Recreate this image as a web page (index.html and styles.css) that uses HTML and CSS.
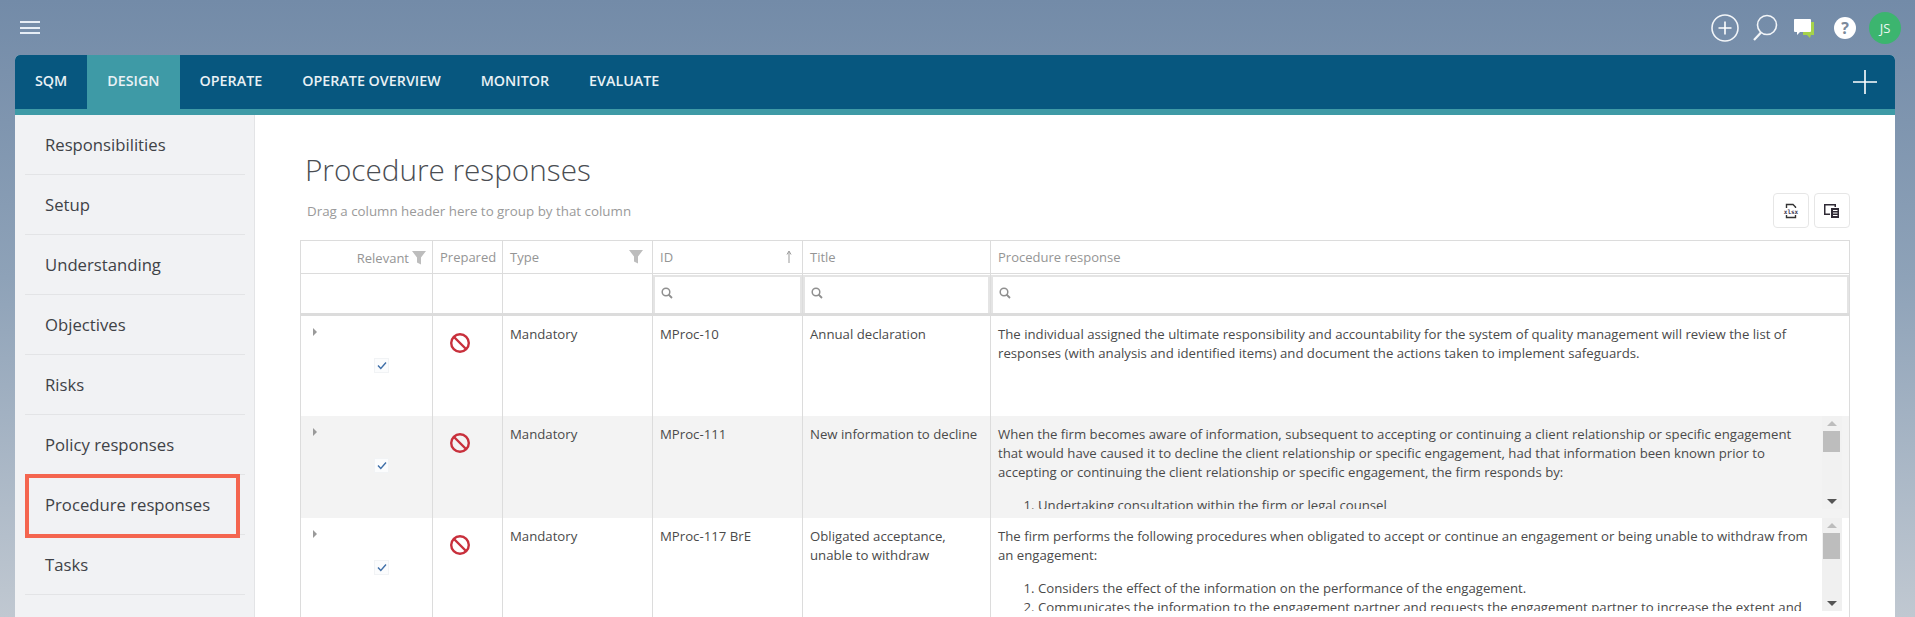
FILE: index.html
```html
<!DOCTYPE html>
<html lang="en">
<head>
<meta charset="utf-8">
<title>Procedure responses</title>
<link rel="stylesheet" href="styles.css">
</head>
<body>
<header class="topbar">
  <div class="burger"><span></span><span></span><span></span></div>
  <div class="top-icons">
    <svg class="ic-add" width="30" height="30" viewBox="0 0 30 30"><circle cx="15" cy="15" r="13" fill="none" stroke="#f2f5f8" stroke-width="1.6"/><path d="M15 8.5v13M8.5 15h13" stroke="#fff" stroke-width="1.6"/></svg>
    <svg class="ic-search" width="28" height="30" viewBox="0 0 28 30"><circle cx="16" cy="12" r="9.5" fill="none" stroke="#f2f5f8" stroke-width="1.6"/><path d="M10 19.5L3 27" stroke="#f2f5f8" stroke-width="2.2"/></svg>
    <svg class="ic-chat" width="22" height="22" viewBox="0 0 22 22"><path d="M10 4h11v13h-3l-1 3-3-3h-4z" fill="#a5d24a"/><path d="M1 1.500Q1 1 2 1h15q1 0 1 1v11q0 1-1 1H7l-3 3v-3H2q-1 0-1-1z" fill="#fff"/></svg>
    <div class="ic-help">?</div>
    <div class="avatar">JS</div>
  </div>
</header>
<div class="card">
  <nav class="tabs">
    <a class="tab">SQM</a>
    <a class="tab active">DESIGN</a>
    <a class="tab">OPERATE</a>
    <a class="tab">OPERATE OVERVIEW</a>
    <a class="tab">MONITOR</a>
    <a class="tab">EVALUATE</a>
    <svg class="tab-plus" width="24" height="24" viewBox="0 0 24 24"><path d="M12 0v24M0 12h24" stroke="#fff" stroke-width="1.6"/></svg>
  </nav>
  <div class="content">
    <aside class="sidebar">
      <ul class="side-list">
        <li class="side-item">Responsibilities</li>
        <li class="side-item">Setup</li>
        <li class="side-item">Understanding</li>
        <li class="side-item">Objectives</li>
        <li class="side-item">Risks</li>
        <li class="side-item">Policy responses</li>
        <li class="side-item current">Procedure responses<span class="callout"></span></li>
        <li class="side-item">Tasks</li>
      </ul>
    </aside>
    <main class="main">
      <h1 class="page-title">Procedure responses</h1>
      <div class="toolbar">
        <span class="group-hint">Drag a column header here to group by that column</span>
        <div class="tool-buttons">
          <button class="tool-btn">
            <svg width="16" height="16" viewBox="0 0 16 16"><path d="M3.500 5V1.500h6.500L12.500 4V5M3.500 12v2.500h9V12" fill="none" stroke="#333" stroke-width="1.400"/><text x="8" y="10.800" text-anchor="middle" class="xlsx">xlsx</text></svg>
          </button>
          <button class="tool-btn">
            <svg width="16" height="16" viewBox="0 0 16 16"><path d="M0 1h12v3h-1.500V2.500h-9v8H6V12H0z" fill="#2f2a35"/><path d="M7 5h8v10H7z" fill="#2f2a35"/><path d="M9 7.500h4.500M9 10h4.500M9 12.500h4.500" stroke="#fff"/></svg>
          </button>
        </div>
      </div>
      <table class="grid">
        <colgroup>
          <col class="c-rel"><col class="c-prep"><col class="c-type"><col class="c-id"><col class="c-title"><col class="c-desc">
        </colgroup>
        <thead>
          <tr class="head-row">
            <th class="th-rel"><span>Relevant</span><svg class="filter" width="14" height="14" viewBox="0 0 14 14"><path d="M0 0h14L9 6.500v7L5 11.500V6.500z" fill="#bdbdbd"/></svg></th>
            <th>Prepared</th>
            <th><div class="th-split"><span>Type</span><svg class="filter" width="14" height="14" viewBox="0 0 14 14"><path d="M0 0h14L9 6.500v7L5 11.500V6.500z" fill="#bdbdbd"/></svg></div></th>
            <th><div class="th-split"><span>ID</span><svg width="8" height="14" viewBox="0 0 8 14"><path d="M4 13V2M2 4.500L4 1l2 3.500" fill="none" stroke="#999"/></svg></div></th>
            <th>Title</th>
            <th>Procedure response</th>
          </tr>
          <tr class="filter-row">
            <td></td><td></td><td></td>
            <td class="search-cell"><div class="search-box"><svg width="12" height="12" viewBox="0 0 12 12"><circle cx="5" cy="5" r="3.800" fill="none" stroke="#8f8f8f" stroke-width="1.500"/><path d="M7.500 7.500L11 11" stroke="#8f8f8f" stroke-width="1.800"/></svg></div></td>
            <td class="search-cell"><div class="search-box"><svg width="12" height="12" viewBox="0 0 12 12"><circle cx="5" cy="5" r="3.800" fill="none" stroke="#8f8f8f" stroke-width="1.500"/><path d="M7.500 7.500L11 11" stroke="#8f8f8f" stroke-width="1.800"/></svg></div></td>
            <td class="search-cell"><div class="search-box"><svg width="12" height="12" viewBox="0 0 12 12"><circle cx="5" cy="5" r="3.800" fill="none" stroke="#8f8f8f" stroke-width="1.500"/><path d="M7.500 7.500L11 11" stroke="#8f8f8f" stroke-width="1.800"/></svg></div></td>
          </tr>
        </thead>
        <tbody>
          <tr class="row row-a">
            <td class="cell-rel"><span class="expander"></span><span class="check"><svg width="10" height="9" viewBox="0 0 10 9"><path d="M1 4.500L3.800 7.500L9 1.500" fill="none" stroke="#3f6fa8" stroke-width="1.400"/></svg></span></td>
            <td class="cell-prep"><svg width="22" height="22" viewBox="0 0 22 22"><circle cx="11" cy="11" r="8.800" fill="none" stroke="#c8303c" stroke-width="2.400"/><path d="M5 5l12 12" stroke="#c8303c" stroke-width="2.400"/></svg></td>
            <td>Mandatory</td>
            <td>MProc-10</td>
            <td>Annual declaration</td>
            <td class="cell-desc"><div class="desc-body"><div class="desc-text"><p>The individual assigned the ultimate responsibility and accountability for the system of quality management will review the list of<br>responses (with analysis and identified items) and document the actions taken to implement safeguards.</p></div></div></td>
          </tr>
          <tr class="row row-b alt">
            <td class="cell-rel"><span class="expander"></span><span class="check"><svg width="10" height="9" viewBox="0 0 10 9"><path d="M1 4.500L3.800 7.500L9 1.500" fill="none" stroke="#3f6fa8" stroke-width="1.400"/></svg></span></td>
            <td class="cell-prep"><svg width="22" height="22" viewBox="0 0 22 22"><circle cx="11" cy="11" r="8.800" fill="none" stroke="#c8303c" stroke-width="2.400"/><path d="M5 5l12 12" stroke="#c8303c" stroke-width="2.400"/></svg></td>
            <td>Mandatory</td>
            <td>MProc-111</td>
            <td>New information to decline</td>
            <td class="cell-desc"><div class="desc-body scrolling"><div class="desc-text"><p>When the firm becomes aware of information, subsequent to accepting or continuing a client relationship or specific engagement<br>that would have caused it to decline the client relationship or specific engagement, had that information been known prior to<br>accepting or continuing the client relationship or specific engagement, the firm responds by:</p><ol><li>Undertaking consultation within the firm or legal counsel</li></ol></div>
              <div class="scrollbar"><span class="arrow up"></span><span class="thumb thumb-short"></span><span class="spacer"></span><span class="arrow down"></span></div></div></td>
          </tr>
          <tr class="row row-c">
            <td class="cell-rel"><span class="expander"></span><span class="check"><svg width="10" height="9" viewBox="0 0 10 9"><path d="M1 4.500L3.800 7.500L9 1.500" fill="none" stroke="#3f6fa8" stroke-width="1.400"/></svg></span></td>
            <td class="cell-prep"><svg width="22" height="22" viewBox="0 0 22 22"><circle cx="11" cy="11" r="8.800" fill="none" stroke="#c8303c" stroke-width="2.400"/><path d="M5 5l12 12" stroke="#c8303c" stroke-width="2.400"/></svg></td>
            <td>Mandatory</td>
            <td>MProc-117 BrE</td>
            <td>Obligated acceptance,<br>unable to withdraw</td>
            <td class="cell-desc"><div class="desc-body scrolling"><div class="desc-text"><p>The firm performs the following procedures when obligated to accept or continue an engagement or being unable to withdraw from<br>an engagement:</p><ol><li>Considers the effect of the information on the performance of the engagement.</li><li>Communicates the information to the engagement partner and requests the engagement partner to increase the extent and</li></ol></div>
              <div class="scrollbar"><span class="arrow up"></span><span class="thumb thumb-long"></span><span class="spacer"></span><span class="arrow down"></span></div></div></td>
          </tr>
        </tbody>
      </table>
    </main>
  </div>
</div>
</body>
</html>
```
FILE: styles.css
```css
* { box-sizing: border-box; }
html, body { margin: 0; height: 617px; overflow: hidden; }
body {
  font-family: "Open Sans", "Liberation Sans", sans-serif;
  background: linear-gradient(180deg, #738ba8 0%, #8ea2b8 45%, #c0c8d1 100%);
  color: #444;
}
.topbar {
  height: 55px;
  padding: 0 14px 0 20px;
  display: flex;
  align-items: center;
  justify-content: space-between;
}
.burger { width: 20px; display: flex; flex-direction: column; gap: 3.5px; }
.burger span { height: 2px; background: #e6edf5; display: block; }
.top-icons { display: flex; align-items: center; }
.ic-add { margin-right: 11px; }
.ic-search { margin-right: 14px; }
.ic-chat { margin-right: 19px; margin-top: 2px; }
.ic-help {
  width: 22px; height: 22px; border-radius: 50%;
  background: #fff; color: #7b8a9b;
  font: 700 16px/22px "Open Sans", sans-serif; text-align: center;
  margin-right: 13px;
}
.avatar {
  width: 32px; height: 32px; border-radius: 50%;
  background: #3cb56f; color: #eef8f2;
  font-size: 13px; line-height: 32px; text-align: center;
}
.card { margin-left: 15px; width: 1880px; height: 562px; overflow: hidden; border-radius: 5px 5px 0 0; background: #fff; }
.tabs {
  height: 60px;
  background: #07577f;
  border-bottom: 6px solid #3e9aa6;
  display: flex;
  align-items: stretch;
}
.tab {
  padding: 0 20px;
  color: #e9f1f5;
  font-size: 14.300px;
  font-weight: 600;
  line-height: 52px;
}
.tab.active { background: #3e9aa6; }
.tab-plus { margin: 15px 18px 0 auto; }
.content { display: flex; height: 502px; }
.sidebar { width: 240px; flex: none; background: #f1f2f4; border-right: 1px solid #e3e4e6; padding: 0 9px 0 10px; }
.side-list { list-style: none; margin: 0; padding: 0; }
.side-item {
  position: relative;
  height: 60px;
  line-height: 60px;
  padding-left: 20px;
  font-size: 16.700px;
  color: #3f4247;
  border-bottom: 1px solid #e3e4e6;
}
.callout {
  position: absolute;
  left: 0; top: -1px;
  width: 215px; height: 64px;
  border: 4px solid #f4654f;
}
.main { flex: 1; padding: 30px 45px 0; min-width: 0; }
.page-title {
  margin: 0 0 0 5px;
  height: 48px;
  font-size: 29.700px;
  line-height: 50px;
  font-weight: 300;
  color: #4a4d52;
}
.toolbar { height: 35px; margin-bottom: 12px; display: flex; justify-content: space-between; align-items: center; }
.group-hint { font-size: 13.350px; color: #9a9a9a; margin-left: 7px; }
.tool-buttons { display: flex; gap: 5px; }
.tool-btn {
  width: 36px; height: 35px; padding: 0;
  background: #fff; border: 1px solid #e6e6e6; border-radius: 4px;
  display: flex; align-items: center; justify-content: center;
}
.xlsx { font-family: "DejaVu Sans Mono", monospace; font-size: 6px; font-weight: 700; fill: #3a3550; }
.grid {
  table-layout: fixed;
  width: 1550px;
  border-collapse: collapse;
  font-size: 13.200px;
  color: #4a4a4a;
}
.c-rel { width: 132px; }
.c-prep { width: 70px; }
.c-type, .c-id { width: 150px; }
.c-title { width: 188px; }
.grid td, .grid th { border-left: 1px solid #dcdcdc; border-right: 1px solid #dcdcdc; padding: 0; }
.head-row { height: 33px; }
.head-row th {
  border-top: 1px solid #dcdcdc;
  border-bottom: 1px solid #dcdcdc;
  padding: 0 7px;
  text-align: left;
  font-weight: 400;
  font-size: 13px;
  color: #959595;
}
.grid .th-rel { padding-right: 6px; text-align: right; white-space: nowrap; }
.th-rel span { vertical-align: middle; margin-right: 3px; }
.th-rel .filter { vertical-align: middle; margin-left: 0; }
.th-split { display: flex; justify-content: space-between; align-items: center; }
.th-split svg:last-child { margin-right: 2px; }
.filter-row { height: 41px; }
.filter-row td { border-bottom: 3px solid #dcdcdc; }
.search-box { height: 38px; border: 2px solid #e4e4e4; border-bottom: 0; padding: 0 0 4px 6px; display: flex; align-items: center; }
.row { height: 101px; }
.row-b { height: 102px; }
.row td { vertical-align: top; padding: 9px 7px 0; line-height: 19px; }
.alt td { background: #f3f3f3; }
.grid .cell-rel { padding: 12px 0 0 12px; }
.expander {
  display: block; width: 0; height: 0;
  border-left: 4px solid #9a9a9a;
  border-top: 4px solid transparent;
  border-bottom: 4px solid transparent;
}
.check {
  display: flex; align-items: center; justify-content: center;
  width: 15px; height: 15px;
  margin: 22px 0 0 61px;
  background: #fbfcfd; border: 1px solid #f1f3f5;
}
.grid .cell-prep { padding: 16px 0 0 16px; }
.grid .cell-desc { padding: 0; }
.desc-body { display: flex; height: 93px; overflow: hidden; padding-right: 7px; }
.desc-text { flex: 1; min-width: 0; padding: 9px 0 0 7px; white-space: nowrap; overflow: hidden; }
.desc-text p { margin: 0; }
.desc-text ol { margin: 14px 0 0; padding-left: 40px; }
.scrollbar { width: 20px; flex: none; background: #f0f0f0; display: flex; flex-direction: column; align-items: center; padding: 5px 2px 5px 1px; }
.alt .scrollbar { background: #f1f1f1; }
.arrow { display: block; width: 0; height: 0; border-left: 5px solid transparent; border-right: 5px solid transparent; }
.arrow.up { border-bottom: 5px solid #bdbdbd; margin-bottom: 5px; }
.arrow.down { border-top: 5px solid #555; }
.thumb { display: block; width: 17px; background: #bdbdbd; }
.thumb-short { height: 21px; }
.thumb-long { height: 26px; }
.spacer { flex: 1; }
```
